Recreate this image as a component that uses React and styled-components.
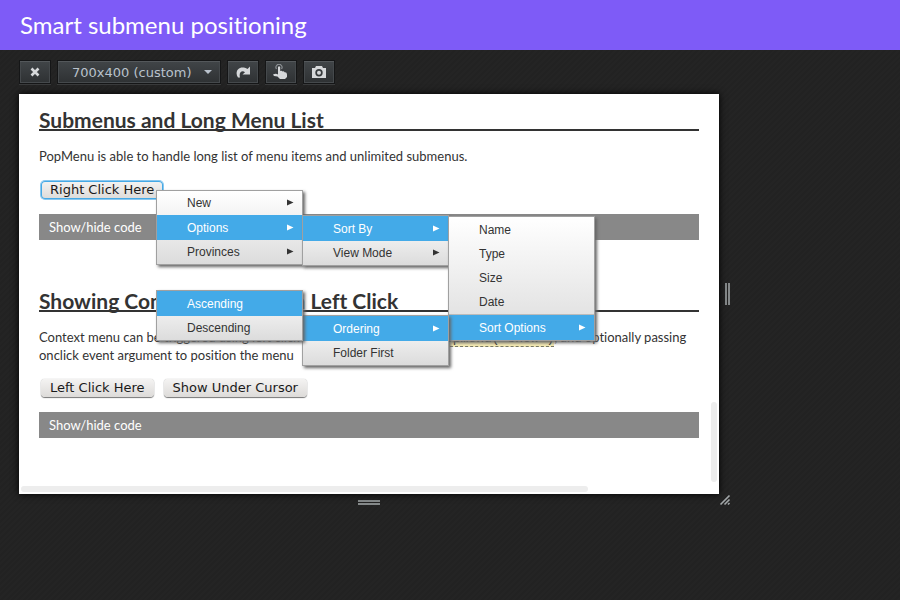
import React from "react";
import styled, { createGlobalStyle, css } from "styled-components";

const Global = createGlobalStyle`
  * { box-sizing: border-box; }
  body {
    margin: 0;
    background: #232323;
    color: #333;
    font: 13px/18px "Trebuchet MS", Lato, sans-serif;
    font-variant-ligatures: none;
  }
`;

const Page = styled.div`
  min-height: 100vh;
  background: repeating-linear-gradient(135deg, #222 0 2px, #242424 2px 4px);
`;

const Header = styled.header`
  padding: 0 20px;
  background: #7e5bf7;
  color: #fff;
`;

const Title = styled.h1`
  margin: 0;
  font-size: 24px;
  font-weight: 400;
  line-height: 50px;
`;

const Toolbar = styled.div`
  display: flex;
  gap: 6px;
  padding: 10px 19px;
`;

const toolFace = css`
  height: 24px;
  border: 1px solid #151617;
  box-shadow: inset 0 1px 0 #54585b, inset 0 0 0 1px #45494c, 0 1px 0 #3a3b3c;
  background: linear-gradient(#414548, #2e3133);
  color: #d6d8da;
`;

const ToolButton = styled.button`
  ${toolFace}
  display: flex;
  align-items: center;
  justify-content: center;
  width: 32px;
  padding: 0;
`;

const SelectBox = styled.div`
  position: relative;
  display: flex;
  width: 164px;
`;

const SizeSelect = styled.select`
  ${toolFace}
  width: 100%;
  padding: 0 14px;
  appearance: none;
  border-radius: 0;
  color: #b9c2cc;
  font: 13px "DejaVu Sans", sans-serif;
`;

const SelectArrow = styled.svg`
  position: absolute;
  right: 9px;
  top: 10px;
  pointer-events: none;
`;

const Workspace = styled.div`
  display: grid;
  grid-template-columns: minmax(0, 700px) auto;
  grid-template-rows: auto auto;
  justify-content: start;
  padding-left: 19px;
`;

const Viewport = styled.main`
  position: relative;
  min-height: 400px;
  padding: 0 20px;
  background: #fff;
  box-shadow: 0 0 7px #000;
`;

const Grip = styled.div`
  display: flex;
  align-items: center;
  justify-content: center;
  padding: ${(p) => (p.$side ? "0 6px" : "6px 0")};
`;

const Section = styled.section`
  padding-top: ${(p) => (p.$first ? "17px" : "52px")};
`;

const Heading = styled.h2`
  margin: 0;
  border-bottom: 2px solid #333;
  font-size: 21px;
  font-weight: 700;
  line-height: 18px;
`;

const Text = styled.p`
  margin: 16px 0 15px;
`;

const Code = styled.code`
  border-bottom: 1px dashed #776;
  background: #f7ecb5;
  font: 13px "Liberation Mono", monospace;
  white-space: nowrap;
`;

const ButtonRow = styled.div`
  display: flex;
  gap: 10px;
  padding: 0 2px;
`;

const Anchor = styled.div`
  position: relative;
`;

const DemoButton = styled.button`
  height: 18px;
  padding: 0 9px;
  border: 0;
  border-radius: 4px;
  background: linear-gradient(#f4f3f2, #dddbd9);
  box-shadow: ${(p) => (p.$focused ? "inset 0 0 0 1px #45a9e6, 0 0 0 1px #8ac8ef" : "0 1px 1px #777, 0 0 1px #999")};
  color: #1a1a1a;
  font: 13px/18px "DejaVu Sans", sans-serif;
`;

const CodeToggle = styled.button`
  display: block;
  width: 100%;
  margin-top: 15px;
  padding: 4px 10px;
  border: 0;
  background: #888;
  color: #fff;
  font: inherit;
  text-align: left;
`;

const MenuList = styled.ul`
  position: absolute;
  z-index: 2;
  width: 147px;
  margin: 0;
  padding: ${(p) => (p.$padded ? "1px 0 0" : "0")};
  border: 1px solid #a0a0a0;
  background: linear-gradient(#fff, #dcdcdc);
  box-shadow: 2px 2px 3px #666;
  list-style: none;
  ${(p) => p.$place === "root" && "left: 115px; top: 10px;"}
  ${(p) => p.$place === "right" && "left: 100%; top: 0;"}
  ${(p) => p.$place === "left" && "right: 100%; top: 0;"}
  ${(p) => p.$place === "leftUp" && "right: 100%; bottom: 0;"}
`;

const MenuItem = styled.li`
  position: relative;
  border-top: ${(p) => (p.$divided ? "1px solid #bbb" : "0")};
`;

const MenuButton = styled.button`
  display: flex;
  align-items: center;
  justify-content: space-between;
  width: 100%;
  height: ${(p) => (p.$active ? "25px" : "24px")};
  padding: 0 8px 0 30px;
  border: 0;
  background: ${(p) => (p.$active ? "#43aae8" : "transparent")};
  color: ${(p) => (p.$active ? "#fff" : "#333")};
  font: 12px "Liberation Sans", Arial, sans-serif;
`;

const Scrollbar = styled.div`
  position: absolute;
  border-radius: 3px;
  background: #ededed;
  ${(p) =>
    p.$vertical
      ? "right: 2px; bottom: 12px; width: 6px; height: 20%;"
      : "left: 2px; bottom: 2px; width: 81%; height: 6px;"}
`;

const menu = [
  { label: "New", arrow: true },
  {
    label: "Options",
    arrow: true,
    place: "right",
    items: [
      {
        label: "Sort By",
        arrow: true,
        place: "right",
        items: [
          { label: "Name" },
          { label: "Type" },
          { label: "Size" },
          { label: "Date" },
          {
            label: "Sort Options",
            arrow: true,
            divided: true,
            place: "left",
            items: [
              {
                label: "Ordering",
                arrow: true,
                place: "leftUp",
                items: [{ label: "Ascending", active: true }, { label: "Descending" }],
              },
              { label: "Folder First" },
            ],
          },
        ],
      },
      { label: "View Mode", arrow: true },
    ],
  },
  { label: "Provinces", arrow: true },
];

function Menu({ items, place }) {
  return (
    <MenuList $place={place} $padded={items.some((item) => item.divided)}>
      {items.map((item) => {
        const active = Boolean(item.items || item.active);
        return (
          <MenuItem key={item.label} $divided={item.divided}>
            <MenuButton $active={active}>
              {item.label}
              {item.arrow && (
                <svg width="7" height="8" viewBox="0 0 7 8" aria-hidden="true">
                  <path d="M0 0.500L6.500 3.500L0 6.500Z" fill="currentColor" />
                </svg>
              )}
            </MenuButton>
            {item.items && <Menu items={item.items} place={item.place} />}
          </MenuItem>
        );
      })}
    </MenuList>
  );
}

export default function App() {
  return (
    <Page>
      <Global />
      <Header>
        <Title>Smart submenu positioning</Title>
      </Header>
      <Toolbar>
        <ToolButton aria-label="Close">
          <svg width="10" height="10" viewBox="0 0 10 10">
            <path d="M1.500 1.500L8.500 8.500M8.500 1.500L1.500 8.500" stroke="currentColor" strokeWidth="2.600" />
          </svg>
        </ToolButton>
        <SelectBox>
          <SizeSelect aria-label="Viewport size">
            <option>700x400 (custom)</option>
          </SizeSelect>
          <SelectArrow width="8" height="5" viewBox="0 0 8 5" aria-hidden="true">
            <path d="M0 0H8L4 4Z" fill="#b9c2cc" />
          </SelectArrow>
        </SelectBox>
        <ToolButton aria-label="Rotate">
          <svg width="16" height="14" viewBox="0 0 16 14">
            <path
              d="M15 1.500V9.500H7.500L10 7.200C7 4.800 3.500 7.500 5 12.500H3C-1 7 4 -0.500 12.500 4Z"
              fill="currentColor"
            />
          </svg>
        </ToolButton>
        <ToolButton aria-label="Simulate touch">
          <svg width="16" height="16" viewBox="0 0 16 16">
            <path d="M3.500 5A3 3 0 1 1 8.500 5" fill="none" stroke="#8d9195" strokeWidth="1.200" />
            <path
              d="M5 3Q6 1.500 7.200 3V7Q9 6.500 9.500 7.500Q11 7 11.500 8.300Q14 8 14 10.500V13L12 15H7L4.500 12.500L1 12L0 10.500Q3 9 5 10.500Z"
              fill="currentColor"
            />
          </svg>
        </ToolButton>
        <ToolButton aria-label="Take screenshot">
          <svg width="14" height="12" viewBox="0 0 14 12">
            <path
              fillRule="evenodd"
              d="M0 2H3L4 0H10L11 2H14V12H0ZM7 3A3.700 3.700 0 1 0 7 10.400A3.700 3.700 0 1 0 7 3ZM7 4.800A2 2 0 1 1 7 8.800A2 2 0 1 1 7 4.800Z"
              fill="currentColor"
            />
          </svg>
        </ToolButton>
      </Toolbar>
      <Workspace>
        <Viewport>
          <Section $first>
            <Heading>Submenus and Long Menu List</Heading>
            <Text>PopMenu is able to handle long list of menu items and unlimited submenus.</Text>
            <ButtonRow>
              <Anchor>
                <DemoButton $focused>Right Click Here</DemoButton>
                <Menu items={menu} place="root" />
              </Anchor>
            </ButtonRow>
            <CodeToggle>Show/hide code</CodeToggle>
          </Section>
          <Section>
            <Heading>Showing Context Menu with Left Click</Heading>
            <Text>
              Context menu can be triggered using left click by calling <Code>$('#box').popmenu('show')</Code>, and
              optionally passing onclick event argument to position the menu
            </Text>
            <ButtonRow>
              <DemoButton>Left Click Here</DemoButton>
              <DemoButton>Show Under Cursor</DemoButton>
            </ButtonRow>
            <CodeToggle>Show/hide code</CodeToggle>
          </Section>
          <Scrollbar $vertical />
          <Scrollbar />
        </Viewport>
        <Grip $side>
          <svg width="5" height="22" viewBox="0 0 5 22" aria-hidden="true">
            <path d="M0 0H2V22H0ZM3 0H5V22H3Z" fill="#85898a" />
          </svg>
        </Grip>
        <Grip>
          <svg width="22" height="5" viewBox="0 0 22 5" aria-hidden="true">
            <path d="M0 0H22V2H0ZM0 3H22V5H0Z" fill="#85898a" />
          </svg>
        </Grip>
        <svg width="12" height="12" viewBox="0 0 12 12" aria-hidden="true">
          <path d="M1.500 10.500L10.500 1.500M5.500 10.500L10.500 5.500M9 10.500L10.500 9" stroke="#a3a7a9" strokeWidth="1.600" />
        </svg>
      </Workspace>
    </Page>
  );
}
